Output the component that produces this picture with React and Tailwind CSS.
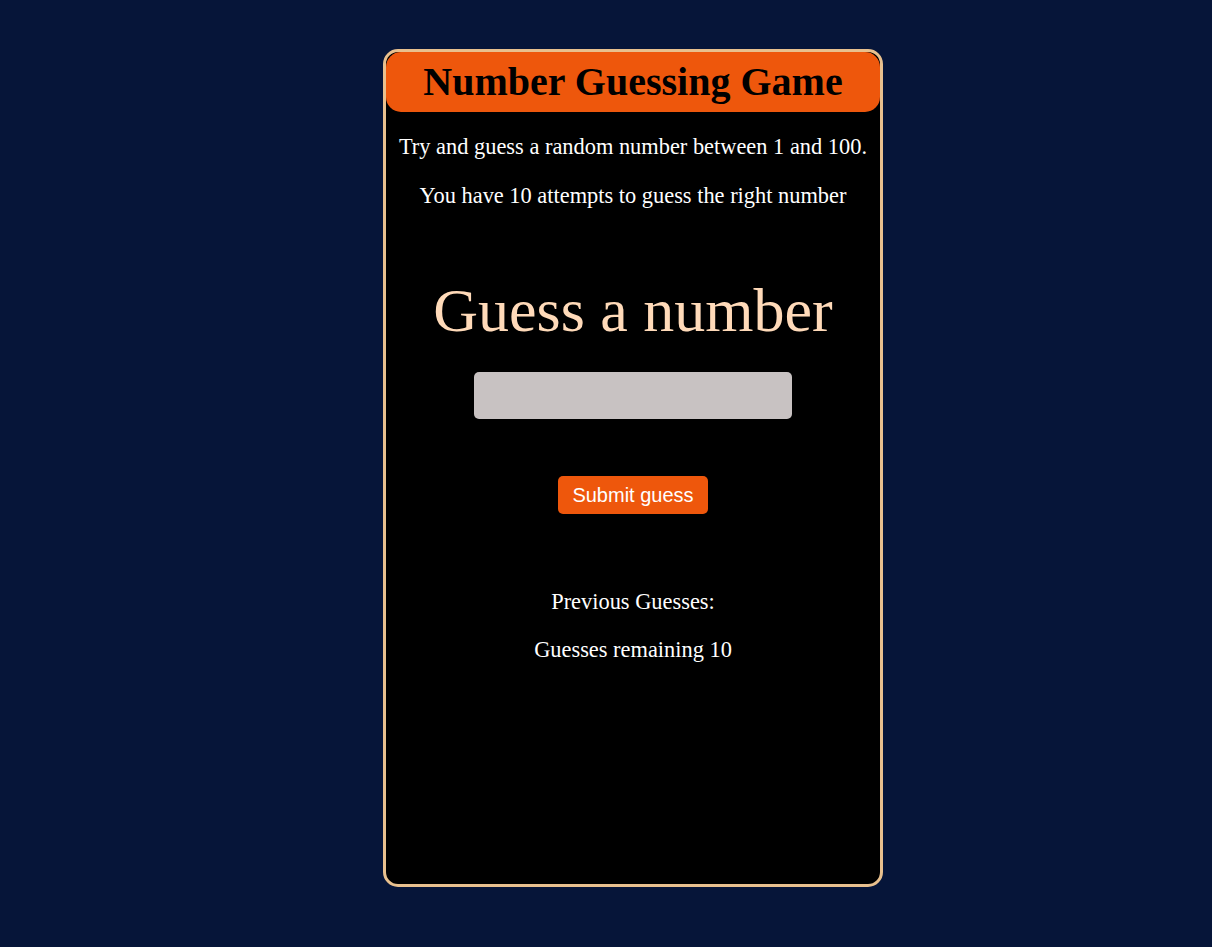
import React, { useState } from "react";

export default function App() {
  const [guess, setGuess] = useState("");
  const [previous, setPrevious] = useState([]);
  const remaining = 10 - previous.length;

  const submit = (e) => {
    e.preventDefault();
    if (!guess) return;
    setPrevious([...previous, guess]);
    setGuess("");
  };

  return (
    <div className="min-h-[947px] bg-[#061539] pt-[49px] font-['Liberation_Serif',serif]">
      <div className="ml-[383px] flex h-[838px] w-[500px] flex-col items-center rounded-[15px] border-[3px] border-[#e8c08e] bg-black text-center">
        <h1 className="flex h-[60px] w-full items-center justify-center rounded-[15px] bg-[#ee570c] text-[40px] font-bold leading-none text-black">
          Number Guessing Game
        </h1>

        <p className="mt-[22px] text-[22.4px] leading-[26px] text-white">
          Try and guess a random number between 1 and 100.
        </p>
        <p className="mt-[23px] text-[22.4px] leading-[26px] text-white">
          You have 10 attempts to guess the right number
        </p>

        <form onSubmit={submit} className="flex flex-col items-center">
          <label
            htmlFor="guessField"
            className="mt-[66px] block text-[62px] leading-[71px] text-[#ffdab9]"
          >
            Guess a number
          </label>
          <input
            id="guessField"
            type="text"
            value={guess}
            onChange={(e) => setGuess(e.target.value)}
            className="mt-[26px] h-[47px] w-[318px] rounded-[5px] bg-[#c8c2c2] px-3 text-[20px] outline-none"
          />
          <button
            type="submit"
            className="mt-[57px] h-[38px] w-[150px] rounded-[5px] bg-[#ee570c] font-['Liberation_Sans',Arial,sans-serif] text-[20px] text-white"
          >
            Submit guess
          </button>
        </form>

        <p className="mt-[75px] text-[22.4px] leading-[26px] text-white">
          Previous Guesses: {previous.join(", ")}
        </p>
        <p className="mt-[22px] text-[22.4px] leading-[26px] text-white">
          Guesses remaining {remaining}
        </p>
      </div>
    </div>
  );
}
